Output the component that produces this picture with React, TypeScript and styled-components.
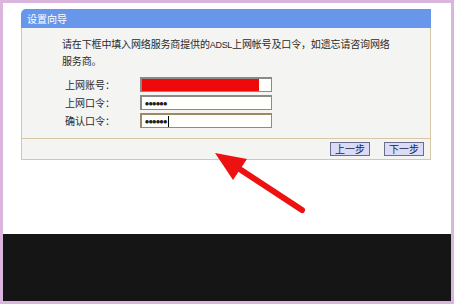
import styled, { createGlobalStyle } from 'styled-components'

const GlobalStyle = createGlobalStyle`
  html, body {
    margin: 0;
    padding: 0;
    background: #ffffff;
  }
  * {
    box-sizing: border-box;
  }
`

const FONT = `"Noto Sans CJK SC", "Liberation Sans", sans-serif`

const Frame = styled.div`
  position: relative;
  width: 454px;
  height: 304px;
  border: 3px solid #dab5dd;
  background: #ffffff;
  display: flex;
  flex-direction: column;
  font-family: ${FONT};
  overflow: hidden;
`

const Stage = styled.div`
  flex: 1;
  padding: 6px 20px 0 18px;
`

const Dialog = styled.div`
  width: 410px;
  display: flex;
  flex-direction: column;
`

const Header = styled.div`
  height: 19px;
  background: #6796ea;
  border-top-left-radius: 5px;
  color: #ffffff;
  font-size: 10px;
  line-height: 19px;
  padding-left: 6px;
`

const Body = styled.div`
  height: 110px;
  background: #f4f4f2;
  border-left: 1px solid #d6c7a6;
  border-right: 1px solid #d6c7a6;
  padding: 8px 0 0 40px;
`

const Intro = styled.p`
  margin: 0;
  font-size: 10px;
  line-height: 16px;
  color: #2a2a2a;
  letter-spacing: -0.15px;
  white-space: nowrap;
`

const Latin = styled.span`
  font-family: "Liberation Sans", sans-serif;
  font-size: 9px;
  letter-spacing: -0.3px;
`

const Form = styled.div`
  margin: 8px 0 0 3px;
  display: grid;
  grid-template-columns: 75px 132px;
  grid-auto-rows: 15px;
  row-gap: 3px;
`

const Label = styled.div`
  font-size: 10px;
  line-height: 15px;
  color: #2a2a2a;
`

const Field = styled.div<{ $focused?: boolean }>`
  position: relative;
  height: 15px;
  background: #fffffb;
  border: 1px solid ${(p) => (p.$focused ? '#9c8a66' : '#8a8a8a')};
  border-top-width: 2px;
  border-left-width: 2px;
  display: flex;
  align-items: center;
  padding-left: 3px;
  overflow: hidden;
`

const Redacted = styled.div`
  position: absolute;
  left: 0;
  top: -2px;
  bottom: -1px;
  width: 117px;
  background: #ee0a0a;
`

const Dots = styled.span`
  font-family: "DejaVu Sans", sans-serif;
  font-size: 4.5px;
  letter-spacing: -0.3px;
  color: #222222;
`

const Caret = styled.span`
  width: 1px;
  height: 11px;
  margin-left: 1px;
  background: #000000;
`

const Footer = styled.div`
  height: 22px;
  background: #f4f4f2;
  border: 1px solid #d6c7a6;
  display: flex;
  justify-content: flex-end;
  align-items: center;
  gap: 14px;
  padding-right: 6px;
`

const StepButton = styled.div`
  width: 40px;
  height: 14px;
  background: #d9dbf7;
  border: 1px solid #6c6c86;
  font-size: 10px;
  line-height: 12px;
  color: #222244;
  text-align: center;
`

const BlackBar = styled.div`
  height: 67px;
  background: #151515;
`

const Arrow = styled.svg`
  position: absolute;
  left: -3px;
  top: -3px;
  width: 454px;
  height: 304px;
  pointer-events: none;
`

export default function App() {
  return (
    <>
      <GlobalStyle />
      <Frame>
        <Stage>
          <Dialog>
            <Header>设置向导</Header>
            <Body>
              <Intro>
                请在下框中填入网络服务商提供的<Latin>ADSL</Latin>上网帐号及口令，如遗忘请咨询网络
                <br />
                服务商。
              </Intro>
              <Form>
                <Label>上网账号：</Label>
                <Field>
                  <Redacted />
                </Field>
                <Label>上网口令：</Label>
                <Field>
                  <Dots>●●●●●●</Dots>
                </Field>
                <Label>确认口令：</Label>
                <Field $focused>
                  <Dots>●●●●●●</Dots>
                  <Caret />
                </Field>
              </Form>
            </Body>
            <Footer>
              <StepButton>上一步</StepButton>
              <StepButton>下一步</StepButton>
            </Footer>
          </Dialog>
        </Stage>
        <BlackBar />
        <Arrow viewBox="0 0 454 304">
          <line
            x1="302"
            y1="210"
            x2="238"
            y2="168"
            stroke="#ee1111"
            strokeWidth="6"
            strokeLinecap="round"
          />
          <polygon points="215,153 247,159 233,180" fill="#ee1111" />
        </Arrow>
      </Frame>
    </>
  )
}
